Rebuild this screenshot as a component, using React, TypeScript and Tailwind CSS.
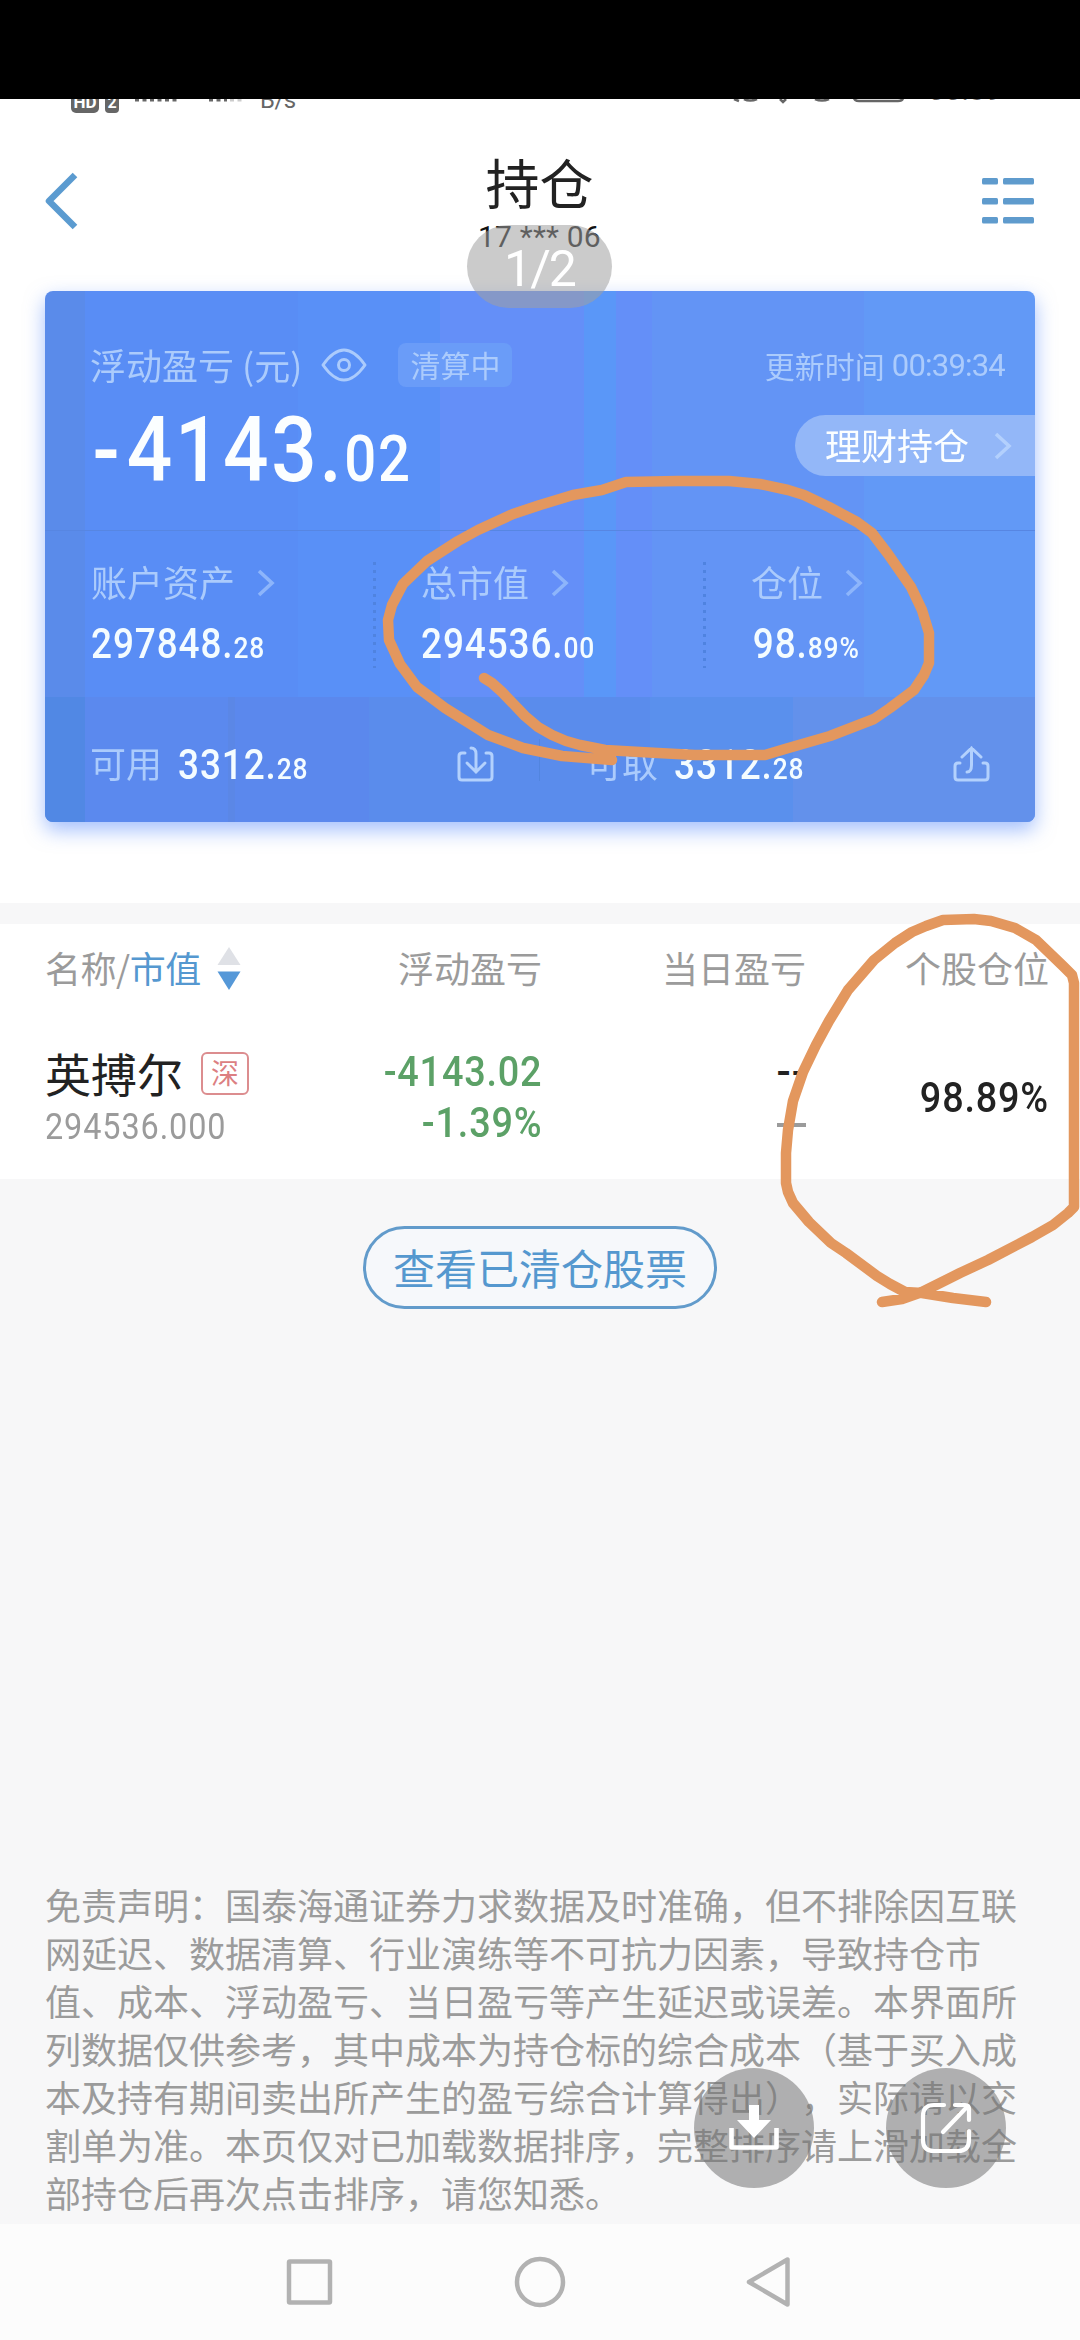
import type { ReactNode } from "react";

const columns = [
  { label: "账户资产", int: "297848.", dec: "28" },
  { label: "总市值", int: "294536.", dec: "00" },
  { label: "仓位", int: "98.", dec: "89%" },
];

const disclaimer = [
  "免责声明：国泰海通证券力求数据及时准确，但不排除因互联",
  "网延迟、数据清算、行业演练等不可抗力因素，导致持仓市",
  "值、成本、浮动盈亏、当日盈亏等产生延迟或误差。本界面所",
  "列数据仅供参考，其中成本为持仓标的综合成本（基于买入成",
  "本及持有期间卖出所产生的盈亏综合计算得出），实际请以交",
  "割单为准。本页仅对已加载数据排序，完整排序请上滑加载全",
  "部持仓后再次点击排序，请您知悉。",
];

// Freehand marker strokes, in page coordinates
const strokes = [
  "484,678 492,683 502,692 525,716 538,727 552,735 566,741 580,745 605,750 640,752 695,755 765,755 785,749 830,736 874,719 890,708 914,690 924,675 929,663 929,633 922,610 911,587 888,554 872,533 857,522 829,507 804,495 788,490 760,484 729,481 678,481 626,482 602,490 573,495 540,505 513,514 478,530 458,541 427,561 403,584 392,605 388,620 389,640 400,664 417,687 445,708 488,735 523,748 562,756 612,760",
  "882,1302 902,1299 922,1292 960,1273 988,1260 1032,1237 1053,1225 1068,1213 1074,1207 1074,983 1072,975 1063,966 1036,940 1015,928 991,921 974,919 943,920 926,926 912,932 895,943 874,960 848,990 829,1021 816,1045 803,1072 793,1101 788,1130 786,1153 786,1183 788,1192 793,1203 809,1222 831,1243 846,1253 877,1276 890,1284 905,1292 922,1293 953,1298 986,1302",
];

function Chevron({ className = "" }: { className?: string }) {
  return (
    <svg width="18" height="28" viewBox="0 0 18 28" fill="none" className={className}>
      <path d="M2 2L15 14L2 26" stroke="currentColor" strokeWidth="3.6" />
    </svg>
  );
}

function Amount({ int, dec, className = "" }: { int: string; dec: string; className?: string }) {
  return (
    <span className={`inline-block origin-left scale-x-[0.88] font-[Roboto] font-medium text-[42px] leading-[42px] tracking-[1px] text-[#f4fcff] whitespace-nowrap ${className}`}>
      {int}
      <span className="text-[30px] tracking-[1px]">{dec}</span>
    </span>
  );
}

function StatusBar() {
  return (
    <div className="h-7 overflow-hidden text-[#666]">
      <div className="flex h-7 items-start pl-[71px]">
        <span className="-mt-2 h-[22px] w-7 rounded-[5px] bg-[#666] text-center font-[Roboto] text-[17px] font-bold leading-[23px] text-white">HD</span>
        <span className="-mt-2 ml-1.5 h-[22px] w-3.5 rounded-[4px] bg-[#666] text-center font-[Roboto] text-[16px] font-bold leading-[23px] text-white">2</span>
        <svg width="112" height="4" className="ml-[14px]">
          <path d="M2 1H46" stroke="currentColor" strokeWidth="3" strokeDasharray="4 3.5" />
          <path d="M76 1H94" stroke="currentColor" strokeWidth="3" strokeDasharray="4 3.5" />
          <path d="M97 1H110" stroke="#ccc" strokeWidth="3" strokeDasharray="4 3.5" />
        </svg>
        <span className="-mt-[13px] ml-[15px] font-[Roboto] text-[24px] leading-[28px] tracking-[-0.5px]">B/s</span>
        <svg width="180" height="5" className="ml-[436px]" fill="none">
          <path d="M2 0L7 2M12 0Q18 3 25 0M48 0L51 3L54 0M83 0Q90 3 97 0" stroke="currentColor" strokeWidth="2.6" />
          <path d="M122 -8V-2Q122 2 127 2H166Q171 2 171 -2V-8" stroke="currentColor" strokeWidth="2.6" />
        </svg>
        <span className="-mt-[23px] ml-[16px] font-[Roboto] text-[30px] leading-[28px]">00:39</span>
      </div>
    </div>
  );
}

function Header() {
  return (
    <header className="grid h-[164px] grid-cols-[1fr_auto_1fr] pl-11 pr-[45px]">
      <svg width="36" height="60" viewBox="0 0 36 60" fill="none" className="mt-[44px]">
        <path d="M31 4L5 30L31 56" stroke="#5b9bd0" strokeWidth="6.5" strokeLinejoin="round" />
      </svg>
      <div className="flex flex-col items-center pt-[25px]">
        <h1 className="text-[54px] font-normal leading-[60px] text-[#222]">持仓</h1>
        <p className="mt-[8px] font-[Roboto] text-[30px] leading-[34px] tracking-[0.2px] text-[#111]">17 *** 06</p>
      </div>
      <svg width="53" height="50" viewBox="0 0 53 50" className="mt-[50px] justify-self-end" fill="#5f9bcd">
        {[0, 20, 39].map((y) => (
          <g key={y}>
            <rect x="0" y={y + 1} width="16" height="6.5" rx="1.5" />
            <rect x="21" y={y + 1} width="31" height="6.5" rx="1.5" />
          </g>
        ))}
      </svg>
    </header>
  );
}

function SummaryCard() {
  return (
    <section className="mx-[45px] h-[531px] overflow-hidden rounded-lg bg-[linear-gradient(90deg,#5a8bea_40px,#598df5_40px,#598df5_253px,#5990f7_253px,#5990f7_395px,#648ff8_395px,#648ff8_539px,#5a97f8_539px,#5a97f8_571px,#648ff8_571px,#648ff8_607px,#6394f5_607px,#6394f5_819px,#6299f6_819px)]">
      <div className="h-60 border-b border-[#5786e2]">
        <div className="flex items-center pl-[45px] pr-[30px] pt-[52px]">
          <span className="-mt-px text-4xl leading-[41px] text-[#abcbfc] whitespace-nowrap">浮动盈亏 (元)</span>
          <svg width="46" height="34" viewBox="0 0 46 34" fill="none" stroke="#abcbfc" strokeWidth="3" className="ml-[19px]">
            <path d="M2 17C9 7 15 2 23 2S37 7 44 17C37 27 31 32 23 32S9 27 2 17Z" strokeLinejoin="round" />
            <circle cx="23" cy="17" r="5.5" />
          </svg>
          <span className="ml-[31px] h-11 w-[114px] rounded-lg bg-[#6a9cf8] text-center text-[30px] leading-[42px] text-[#abcbfc]">清算中</span>
          <span className="ml-auto flex items-center text-[30px] leading-[42px] text-[#abcbfc]">
            更新时间
            <span className="ml-[7px] mt-[2px] font-[Roboto] text-[31px] tracking-[-0.8px]">00:39:34</span>
          </span>
        </div>
        <div className="flex justify-between">
          <p className="w-[400px] origin-left scale-x-[0.88] pl-[54px] pt-[10px] font-[Roboto] text-[91px] font-medium leading-[106px] tracking-[3px] text-[#fbfeff] whitespace-nowrap">
            <span className="tracking-[8px]">-</span>4143.<span className="text-[64px] tracking-[2px]">02</span>
          </p>
          <button className="mt-[28px] flex h-[61px] w-60 items-center rounded-l-full bg-[#93b7f8] pl-[30px] text-left">
            <span className="-mt-[3px] text-4xl leading-[44px] text-[#fbfeff]">理财持仓</span>
            <Chevron className="ml-[25px] text-[#b3d0fd]" />
          </button>
        </div>
      </div>

      <div className="grid h-[166px] grid-cols-3">
        {columns.map((col, i) => (
          <div key={col.label} className="relative pl-[46px] pt-[29px]">
            {i > 0 && (
              <svg width="3" height="106" className="absolute left-[-2px] top-[31px]">
                <path d="M1.5 0V106" stroke="#4f83e0" strokeWidth="3" strokeDasharray="3 5" />
              </svg>
            )}
            <div className="flex items-center text-4xl leading-[43px] text-[#abcbfc]">
              {col.label}
              <Chevron className="ml-[22px] mt-[2px] text-[#8db5fb]" />
            </div>
            <div className="mt-[20px] flex">
              <Amount int={col.int} dec={col.dec} className={i === 2 ? "pl-[2px]" : ""} />
            </div>
          </div>
        ))}
      </div>

      <div className="flex h-[125px] items-center bg-[linear-gradient(90deg,#5188e4_40px,#5b89ee_40px,#5b89ee_183px,#5b87e6_183px,#5b87e6_190px,#5b88ed_190px,#5b88ed_324px,#5a8cec_324px,#5a8cec_605px,#5a90ed_605px,#5a90ed_748px,#6391eb_748px)]">
        <div className="flex h-[42px] w-[495px] items-center gap-4 border-r border-[#5285df] px-[45px] pt-[8px]">
          <span className="-mt-[3px] text-4xl leading-[42px] text-[#abcbfc]">可用</span>
          <Amount int="3312." dec="28" className="mt-[7px]" />
          <svg width="37" height="36" viewBox="0 0 37 36" fill="none" stroke="#b3d1fd" strokeWidth="3" strokeLinecap="round" className="ml-auto">
            <path d="M8 7H5Q2 7 2 10V31Q2 34 5 34H32Q35 34 35 31V10Q35 7 32 7H29" />
            <path d="M14 2Q19 2 19 8V26M10 17L19 26L28 17" />
          </svg>
        </div>
        <div className="flex h-[42px] flex-1 items-center gap-4 pl-[46px] pr-[45px] pt-[8px]">
          <span className="-mt-[3px] text-4xl leading-[42px] text-[#abcbfc]">可取</span>
          <Amount int="3312." dec="28" className="mt-[7px]" />
          <svg width="37" height="36" viewBox="0 0 37 36" fill="none" stroke="#b3d1fd" strokeWidth="3" strokeLinecap="round" className="ml-auto">
            <path d="M7 17H5Q2 17 2 20V31Q2 34 5 34H32Q35 34 35 31V20Q35 17 32 17H30" />
            <path d="M9 11L18.500 2L28 11M18.500 2V19Q18.500 26 14 26" />
          </svg>
        </div>
      </div>
    </section>
  );
}

function Cell({ children, className = "" }: { children: ReactNode; className?: string }) {
  return <div className={`flex flex-col items-end whitespace-nowrap ${className}`}>{children}</div>;
}

function HoldingList() {
  return (
    <section className="h-[255px] bg-white pl-[45px] pr-8">
      <div className="grid h-[88px] grid-cols-[497px_264px_243px] items-center text-4xl leading-[40px] text-[#9b9b9b]">
        <div className="flex items-center justify-between">
          <div className="-mt-[3px] flex items-center tracking-[-0.5px]">
            名称/<span className="text-[#5598d0]">市值</span>
            <svg width="24" height="48" viewBox="0 0 24 48" className="ml-4 mt-[9px]">
              <path d="M12 0L23.500 18H0.500Z" fill="#dfe1e6" />
              <path d="M12 43L23.500 24.500H0.500Z" fill="#5598d8" />
            </svg>
          </div>
          <span className="-mt-[3px]">浮动盈亏</span>
        </div>
        <Cell className="-mt-[3px]">当日盈亏</Cell>
        <Cell className="-mt-[3px]">个股仓位</Cell>
      </div>
      <div className="grid grid-cols-[497px_264px_243px] pt-[34px] font-[Roboto] text-[42px] leading-[51px]">
        <div className="flex justify-between">
          <div>
            <div className="flex items-center pt-px font-['Noto_Sans_CJK_SC',sans-serif] text-[46px] leading-[50px] text-[#222]">
              英搏尔
              <span className="ml-[18px] mt-[2px] h-[43px] w-12 rounded-md border-2 border-[#dc8d8f] text-center text-[28px] leading-[37px] text-[#dc7f82]">深</span>
            </div>
            <p className="origin-left scale-x-90 pt-[3px] text-4xl leading-[54px] tracking-[1px] text-[#9b9b9b]">294536.000</p>
          </div>
          <div className="flex origin-right scale-x-90 flex-col items-end font-medium tracking-[0.9px] text-[#5ca167]">
            <span>-4143.02</span>
            <span>-1.39%</span>
          </div>
        </div>
        <Cell>
          <span className="-mr-px font-medium tracking-[1px] text-[#222]">--</span>
          <span className="mt-[26px] w-[29px] border-t-4 border-[#9b9b9b]" />
        </Cell>
        <Cell className="origin-right scale-x-90 justify-center pb-[6px] font-medium tracking-[0.9px] text-[#222]">98.89%</Cell>
      </div>
    </section>
  );
}

function NavBar() {
  return (
    <nav className="flex h-[116px] justify-center bg-[#fcfcfc] pt-[30px]">
      <svg width="510" height="56" viewBox="0 0 510 56" fill="none" stroke="#b2b2b2" strokeWidth="4.500" strokeLinejoin="round">
        <rect x="4" y="7.500" width="41" height="41" rx="1" />
        <circle cx="255" cy="28" r="23" />
        <path d="M464 28L502.500 5.500V50.500Z" />
      </svg>
    </nav>
  );
}

export default function App() {
  return (
    <div className="relative flex h-[2340px] w-[1080px] flex-col overflow-hidden bg-[#f7f7f8] font-['Noto_Sans_CJK_SC',sans-serif]">
      <div className="h-[99px] shrink-0 bg-black" />
      <div className="h-[804px] shrink-0 bg-white">
        <StatusBar />
        <Header />
        <div className="[filter:drop-shadow(0_8px_10px_rgba(70,125,250,0.5))]">
          <SummaryCard />
        </div>
      </div>
      <div className="h-[21px] shrink-0" />
      <HoldingList />
      <div className="flex justify-center pt-[47px]">
        <button className="h-[83px] w-[354px] rounded-full border-[3px] border-[#629bcb] bg-[#f6f8fb] pb-[3px] text-[42px] leading-[73px] text-[#5598cf]">
          查看已清仓股票
        </button>
      </div>
      <div className="mt-auto pb-[8px] pl-[45px] text-4xl leading-[48px] text-[#9b9b9b] [text-spacing-trim:space-all]">
        {disclaimer.map((line) => (
          <p key={line} className="whitespace-nowrap">{line}</p>
        ))}
      </div>
      <NavBar />

      {/* Page counter */}
      <div className="absolute left-[467px] top-[225px] h-[83px] w-[145px] rounded-full bg-[rgba(160,160,160,0.55)] text-center font-[Roboto] text-[50px] leading-[89px] tracking-[-2px] text-white">
        1/2
      </div>

      {/* Marker strokes */}
      <svg width="1080" height="2340" className="pointer-events-none absolute inset-0" fill="none" stroke="#e3975e" strokeWidth="10.500" strokeLinecap="round" strokeLinejoin="round">
        {strokes.map((points) => (
          <polyline key={points} points={points} />
        ))}
      </svg>

      {/* Floating actions */}
      <button className="absolute left-[694px] top-[2068px] flex size-[120px] items-center justify-center rounded-full bg-[rgba(115,115,115,0.54)]">
        <svg width="52" height="46" viewBox="0 0 52 46" fill="none">
          <path d="M21 0H31V15H43L26 33L9 15H21Z" fill="#fff" />
          <path d="M3.500 23V42.500H48.500V23" stroke="#fff" strokeWidth="4.600" strokeLinejoin="round" />
        </svg>
      </button>
      <button className="absolute left-[886px] top-[2068px] flex size-[120px] items-center justify-center rounded-full bg-[rgba(115,115,115,0.54)]">
        <svg width="52" height="52" viewBox="0 0 52 52" fill="none" stroke="#fff" strokeWidth="4.200" strokeLinecap="round" strokeLinejoin="round">
          <path d="M24 3H14Q3 3 3 14V38Q3 49 14 49H38Q49 49 49 38V29" />
          <path d="M35 3H45Q49 3 49 7V18M47 5L23 30" />
        </svg>
      </button>
    </div>
  );
}
